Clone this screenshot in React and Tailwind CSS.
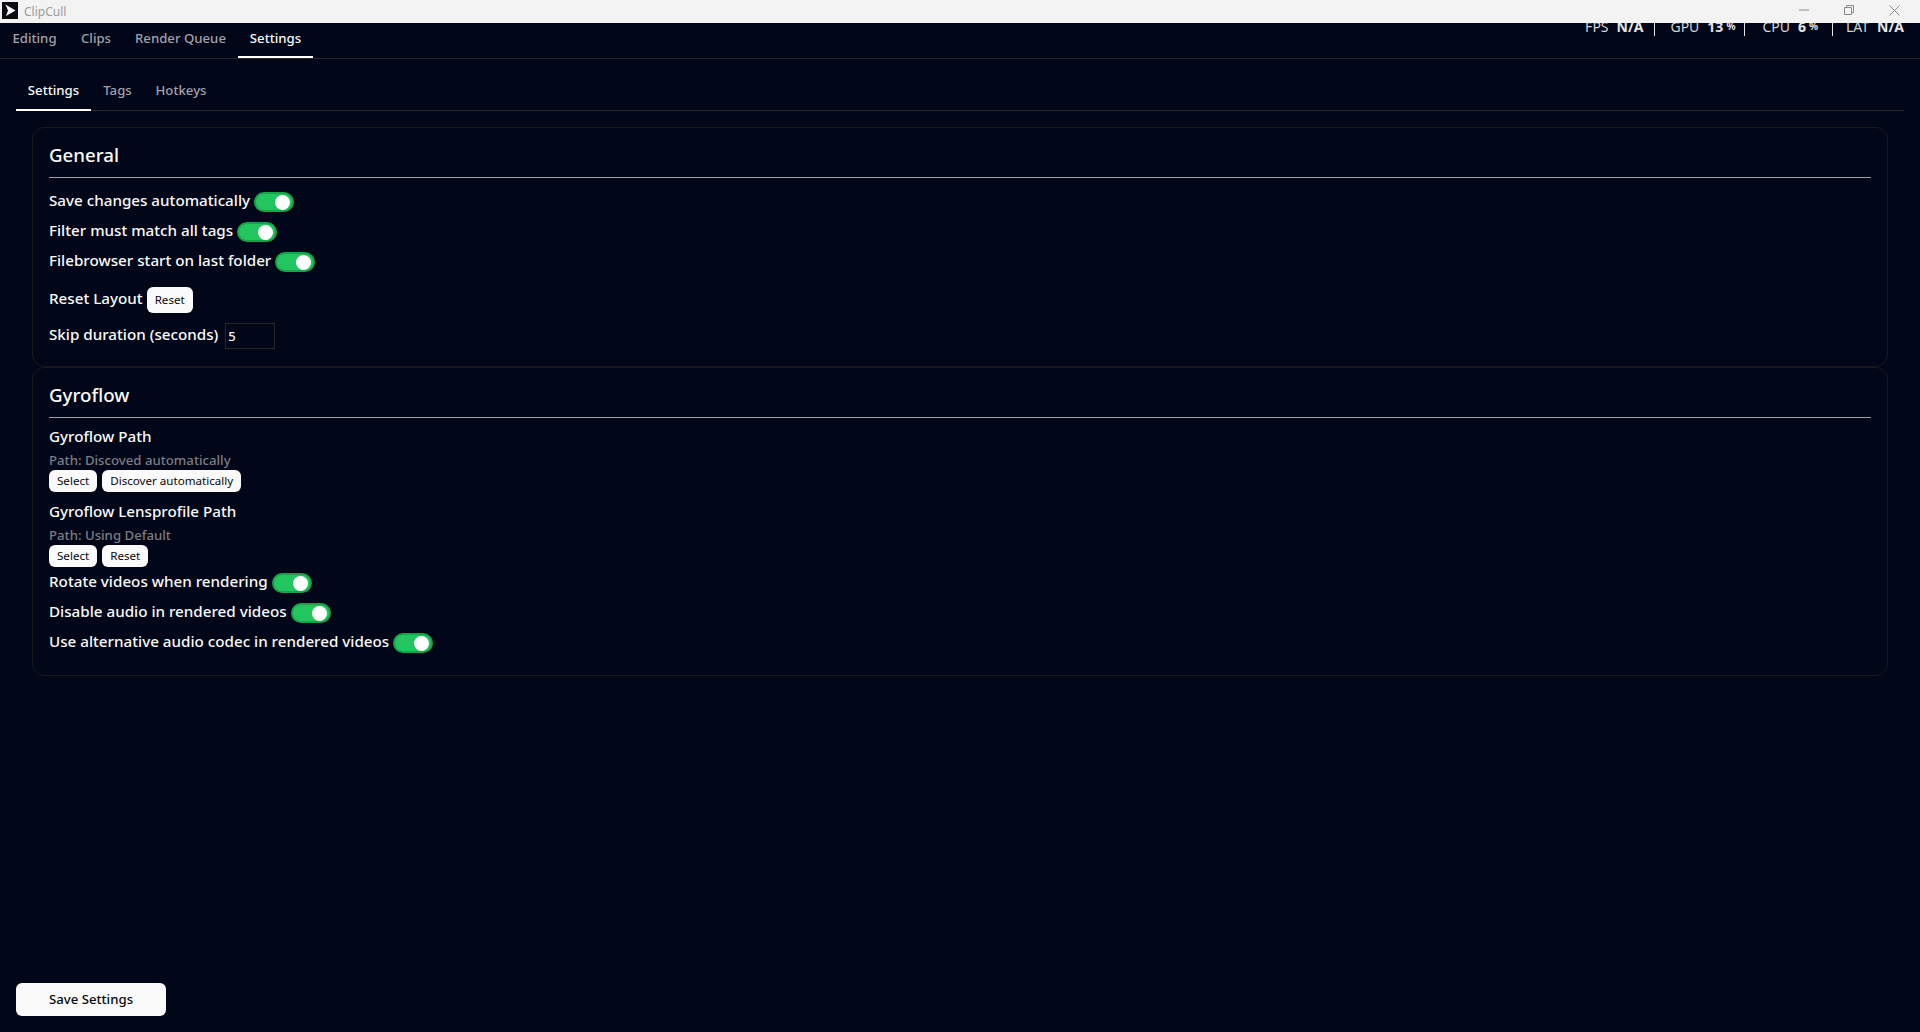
const font = { fontFamily: '"Noto Sans", "Open Sans", sans-serif' };

const Toggle = () => (
    <span className="inline-flex items-center justify-end w-10 h-5 rounded-full bg-[#22c55e] border-2 border-[#16a34a] pr-0.5 shrink-0">
        <span className="w-[15px] h-[15px] rounded-full bg-white" />
    </span>
);

const ToggleRow = ({ label }) => (
    <div className="flex items-center gap-1 h-[30px]">
        <span className="text-[15.2px] font-medium text-[#fafafa] leading-none -mt-[3px]">{label}</span>
        <Toggle />
    </div>
);

const SmallButton = ({ children, className = 'h-[22px]' }) => (
    <button className={`rounded-md bg-[#fafafa] text-[#09090b] text-[11.6px] px-2 leading-none ${className}`}>{children}</button>
);

const Tab = ({ children, active, className }) => (
    <div className={`flex items-center justify-center border-b-2 text-[13.2px] font-medium ${className} ${active ? 'border-white text-[#fafafa]' : 'border-transparent text-[#a1a1aa]'}`}>
        {children}
    </div>
);

const Stat = ({ name, value, unit, className }) => (
    <div className={`flex items-center h-5 text-[14px] text-[#d4d4d8] ${className}`}>
        <span className="mr-2">{name}</span>
        <span className="font-bold text-[#e4e4e7]">{value}</span>
        {unit && <span className="ml-[3px] text-[10px] font-bold text-[#e4e4e7]">{unit}</span>}
    </div>
);

const CardTitle = ({ children, className }) => (
    <div className={`border-b border-[#a1a1aa] h-[36px] ${className}`}>
        <h2 className="text-[18.7px] font-medium text-[#fafafa] leading-[26px]">{children}</h2>
    </div>
);

const PathBlock = ({ title, path, buttons }) => (
    <div>
        <div className="h-[25px] flex items-center text-[15.2px] font-medium text-[#fafafa]">{title}</div>
        <div className="h-[24px] flex items-center text-[13.2px] font-medium text-[#7c7c85]">{path}</div>
        <div className="flex gap-[5px] h-[22px] -mt-[3px]">
            {buttons.map(b => <SmallButton key={b}>{b}</SmallButton>)}
        </div>
    </div>
);

const App = () => {
    return (
        <div style={font} className="w-full h-[1032px] bg-[#010618] flex flex-col overflow-hidden">
            <div className="relative z-10 h-[23px] bg-[#f3f3f3] flex items-center justify-between shrink-0">
                <div className="flex items-center -mt-[3px]">
                    <svg width="16" height="17" viewBox="0 0 16 17" className="ml-[2px]">
                        <rect width="16" height="17" fill="#0c0c10" />
                        <path d="M3.5 2.5 L13.5 8.5 L4 14 L6 8.5 Z" fill="#fff" />
                    </svg>
                    <span className="ml-[6px] text-xs text-[#9a9a9a] mt-[3px]">ClipCull</span>
                </div>
                <div className="flex items-center text-[#8a8a8a] mr-[20px] gap-[35px] -mt-[3px]">
                    <svg width="10" height="10" viewBox="0 0 10 10" fill="none" stroke="currentColor"><path d="M0 5h10" /></svg>
                    <svg width="10" height="10" viewBox="0 0 10 10" fill="none" stroke="currentColor"><path d="M.5 2.5h7v7h-7zM2.5 2.5v-2h7v7h-2" /></svg>
                    <svg width="11" height="11" viewBox="0 0 11 11" fill="none" stroke="currentColor"><path d="M.5.5l10 10M10.5.5l-10 10" /></svg>
                </div>
            </div>

            <div className="h-[36px] border-b border-[#27272a] flex justify-between shrink-0">
                <div className="flex h-[35px]">
                    <Tab className="w-[69px] pb-px">Editing</Tab>
                    <Tab className="w-[54px] pb-px">Clips</Tab>
                    <Tab className="w-[115px] pb-px">Render Queue</Tab>
                    <Tab className="w-[75px] pb-px" active>Settings</Tab>
                </div>
                <div className="flex items-start -mt-[7px] pr-4">
                    <Stat name="FPS" value="N/A" className="pr-[11px] border-r border-[#e4e4e7]" />
                    <Stat name="GPU" value="13" unit="%" className="pl-[15px] pr-[9px] border-r border-[#e4e4e7]" />
                    <Stat name="CPU" value="6" unit="%" className="pl-[17px] pr-[14px] border-r border-[#e4e4e7]" />
                    <Stat name="LAT" value="N/A" className="pl-[13px]" />
                </div>
            </div>

            <div className="flex-1 flex flex-col px-4 pt-[16px] pb-4">
                <div className="flex h-[36px] border-b border-[#27272a] shrink-0">
                    <Tab className="w-[75px] h-[36px] pb-[3px]" active>Settings</Tab>
                    <Tab className="w-[53px] h-[36px] pb-[3px]">Tags</Tab>
                    <Tab className="w-[74px] h-[36px] pb-[3px]">Hotkeys</Tab>
                </div>

                <div className="mt-4 mx-4 flex-1">
                    <section className="border border-[#18181f] rounded-xl px-4 pt-[14px] h-[240px]">
                        <CardTitle className="mb-[9px]">General</CardTitle>
                        <ToggleRow label="Save changes automatically" />
                        <ToggleRow label="Filter must match all tags" />
                        <ToggleRow label="Filebrowser start on last folder" />
                        <div className="flex items-center gap-1 mt-2.5 h-[26px]">
                            <span className="text-[15.2px] font-medium text-[#fafafa] -mt-1">Reset Layout</span>
                            <SmallButton className="h-[26px]">Reset</SmallButton>
                        </div>
                        <div className="flex items-center gap-[7px] mt-2.5 h-[26px]">
                            <span className="text-[15.2px] font-medium text-[#fafafa] -mt-1">Skip duration (seconds)</span>
                            <input readOnly value="5" className="w-[50px] h-[26px] border border-[#27272a] bg-transparent text-[13px] font-medium text-[#fafafa] px-0.5" />
                        </div>
                    </section>

                    <section className="border border-[#18181f] rounded-xl px-4 pt-[14px] h-[309px]">
                        <CardTitle className="mb-1.5">Gyroflow</CardTitle>
                        <PathBlock title="Gyroflow Path" path="Path: Discoved automatically" buttons={['Select', 'Discover automatically']} />
                        <div className="mt-[7px] mb-px">
                            <PathBlock title="Gyroflow Lensprofile Path" path="Path: Using Default" buttons={['Select', 'Reset']} />
                        </div>
                        <ToggleRow label="Rotate videos when rendering" />
                        <ToggleRow label="Disable audio in rendered videos" />
                        <ToggleRow label="Use alternative audio codec in rendered videos" />
                    </section>
                </div>

                <button className="w-[150px] h-[33px] rounded-md bg-[#fafafa] text-[#09090b] text-[13.2px] font-medium shrink-0">Save Settings</button>
            </div>
        </div>
    );
};

export default App;
